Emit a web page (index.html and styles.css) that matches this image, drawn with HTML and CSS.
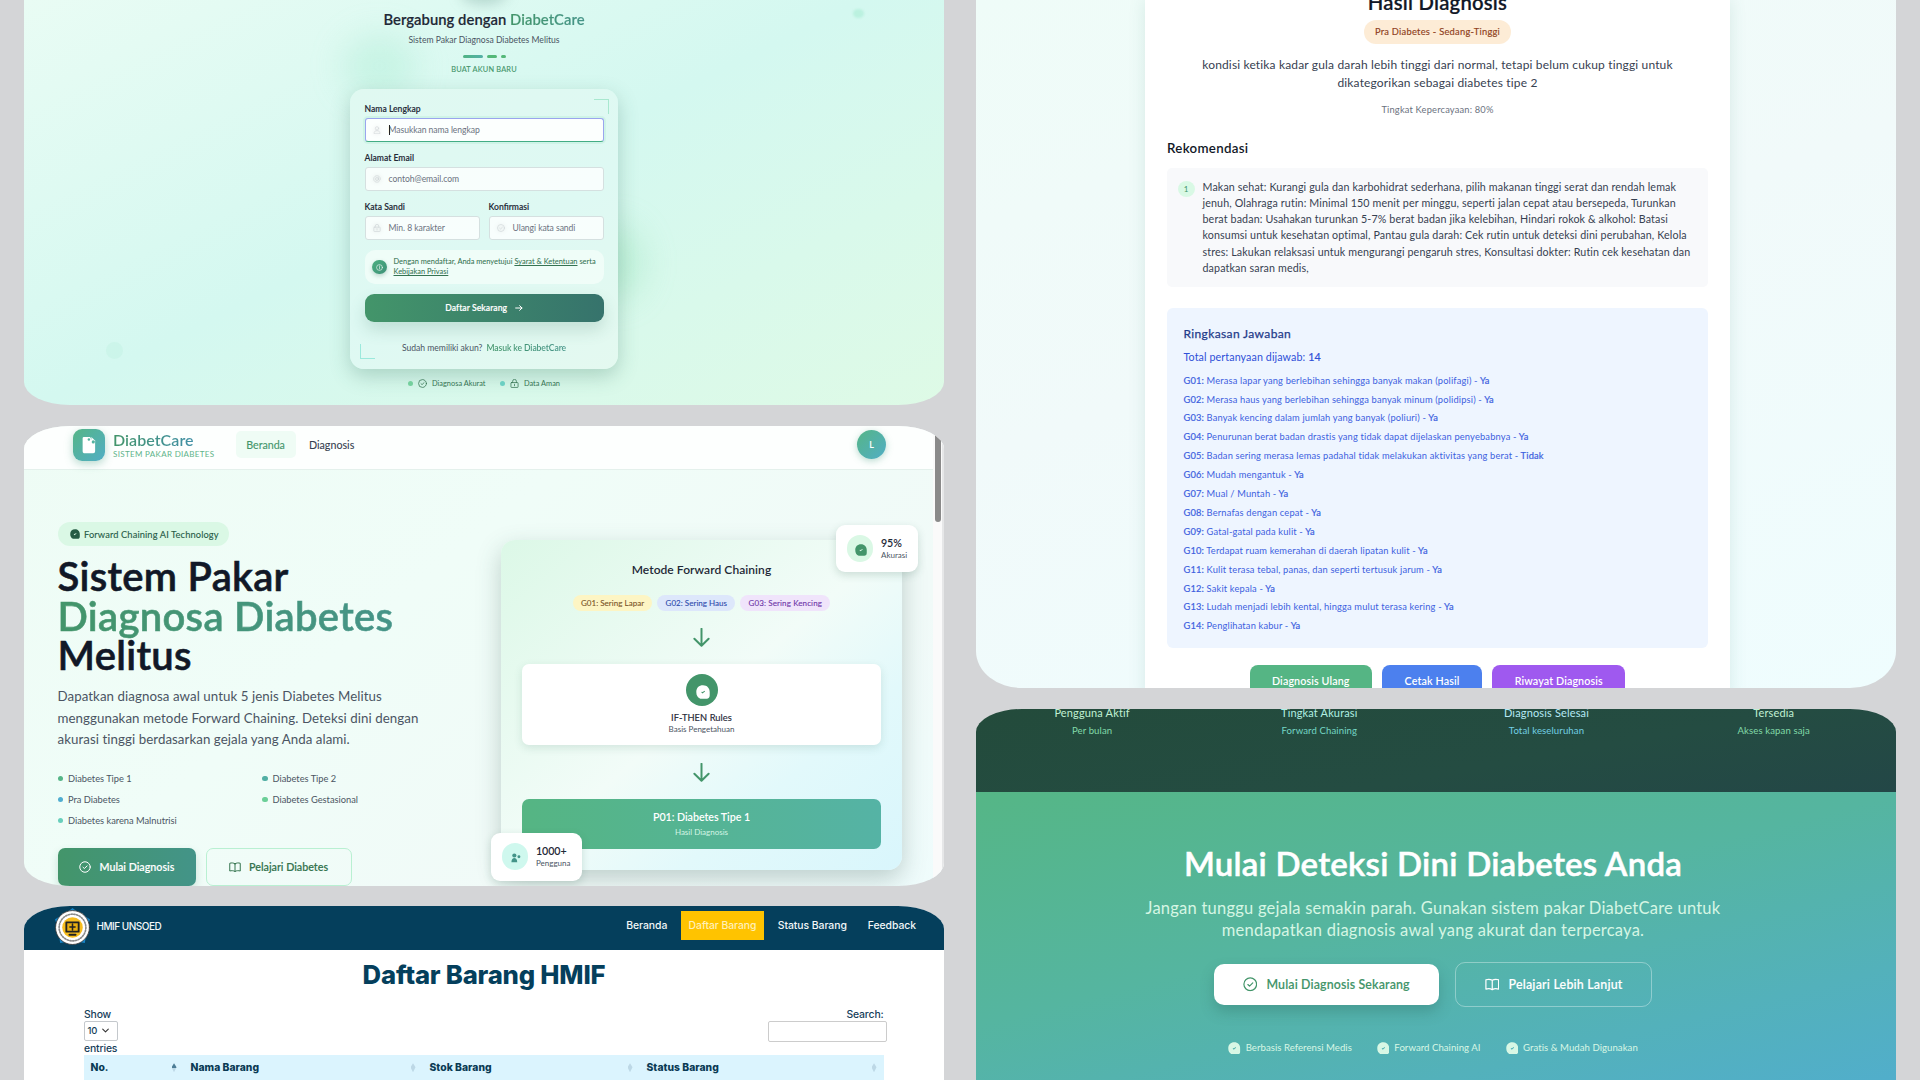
FILE: index.html
```html
<!DOCTYPE html>
<html lang="id">
<head>
<meta charset="utf-8">
<title>DiabetCare</title>
<link rel="stylesheet" href="styles.css">
</head>
<body>
<svg class="sprite" aria-hidden="true">
  <symbol id="check" viewBox="0 0 24 24"><circle cx="12" cy="12" r="10.5"/><path d="M8 12.5l2.8 2.5 5.4-5.2"/></symbol>
  <symbol id="lock" viewBox="0 0 24 24"><rect x="2.5" y="9.5" width="19" height="13" rx="1.5"/><path d="M7 9.500V6a5 5 0 0 1 10 0v3.500M12 14v4"/></symbol>
  <symbol id="book" viewBox="0 0 24 24"><path d="M12 5.500C9 3.500 5 3.500 1.500 4.500v15.500c3.500-1 7.500-1 10.500 1 3-2 7-2 10.500-1V4.500C19 3.500 15 3.500 12 5.500zV21"/></symbol>
  <symbol id="blob" viewBox="0 0 24 24"><path fill-rule="evenodd" d="M12 0.500c7 0 11.500 5 11.500 11.500v6c0 3.500-2 5.500-5 5.500H7.500C3 22 0.500 18 0.500 12 0.500 5 5 0.500 12 0.500zM9 12.500l2 2.200L15.500 11l-.6-1.200-3.600 2.200-1.500-.5z"/></symbol>
  <symbol id="down" viewBox="0 0 24 24"><path d="M12 1v21M3 13.500l9 9 9-9"/></symbol>
</svg>
<main class="board">
<div class="col">

<section class="panel signup">
  <i class="glow g1"></i><i class="glow g2"></i><i class="glow g3"></i><i class="ring"></i><i class="speck"></i>
  <h2 class="su-title">Bergabung dengan <span>DiabetCare</span></h2>
  <p class="su-sub">Sistem Pakar Diagnosa Diabetes Melitus</p>
  <div class="dashes"><i></i><i></i><i></i></div>
  <p class="su-tag">BUAT AKUN BARU</p>
  <form class="su-card">
    <i class="corner tr"></i><i class="corner bl"></i>
    <div class="field"><label>Nama Lengkap</label><div class="input focus"><svg viewBox="0 0 24 24"><circle cx="12" cy="7" r="5"/><path d="M3 22c0-6 4-8 9-8s9 2 9 8z"/></svg><b class="caret"></b>Masukkan nama lengkap</div></div>
    <div class="field"><label>Alamat Email</label><div class="input"><svg viewBox="0 0 24 24"><circle cx="12" cy="12" r="4.500"/><path d="M16.500 8v5.500c0 4 5.500 3 5.500-1.500a10 10 0 1 0-4 8"/></svg>contoh@email.com</div></div>
    <div class="pair">
      <div class="field"><label>Kata Sandi</label><div class="input"><svg><use href="#lock"/></svg>Min. 8 karakter</div></div>
      <div class="field"><label>Konfirmasi</label><div class="input"><svg><use href="#check"/></svg>Ulangi kata sandi</div></div>
    </div>
    <div class="terms"><span class="info"><svg viewBox="0 0 24 24"><circle cx="12" cy="12" r="10"/><path d="M12 11v6M12 6.500v2"/></svg></span><p>Dengan mendaftar, Anda menyetujui <u>Syarat &amp; Ketentuan</u> serta<br><u>Kebijakan Privasi</u></p></div>
    <div class="su-btn">Daftar Sekarang<svg viewBox="0 0 24 24"><path d="M2 12h19M14 5l7 7-7 7"/></svg></div>
    <p class="su-login">Sudah memiliki akun? <b>Masuk ke DiabetCare</b></p>
  </form>
  <div class="su-foot"><span><i></i><svg><use href="#check"/></svg>Diagnosa Akurat</span><span><i class="teal"></i><svg><use href="#lock"/></svg>Data Aman</span></div>
</section>

<section class="panel home">
  <header class="h-nav">
    <div class="logo"><svg viewBox="0 0 24 28"><path d="M3 1h10l2 4 6 4v15a3 3 0 0 1-3 3H3a3 3 0 0 1-2-3V3a2 2 0 0 1 2-2z"/><path d="M15 1l7 7h-7z"/><circle class="hole" cx="11" cy="5" r="2"/><circle class="hole" cx="18" cy="9" r="2.500"/></svg></div>
    <div class="brand"><b>DiabetCare</b><small>SISTEM PAKAR DIABETES</small></div>
    <a class="on">Beranda</a><a>Diagnosis</a>
    <span class="avatar">L</span>
  </header>
  <div class="h-body">
    <div class="hero">
      <span class="badge"><svg><use href="#blob"/></svg>Forward Chaining AI Technology</span>
      <h1>Sistem Pakar<br><em>Diagnosa Diabetes</em><br>Melitus</h1>
      <p class="lead">Dapatkan diagnosa awal untuk 5 jenis Diabetes Melitus<br>menggunakan metode Forward Chaining. Deteksi dini dengan<br>akurasi tinggi berdasarkan gejala yang Anda alami.</p>
      <ul class="types"><li class="c1">Diabetes Tipe 1</li><li class="c2">Diabetes Tipe 2</li><li class="c3">Pra Diabetes</li><li class="c4">Diabetes Gestasional</li><li class="c5">Diabetes karena Malnutrisi</li></ul>
      <div class="h-btns"><a class="fill"><svg><use href="#check"/></svg>Mulai Diagnosis</a><a class="line"><svg><use href="#book"/></svg>Pelajari Diabetes</a></div>
    </div>
    <div class="flow">
      <h3>Metode Forward Chaining</h3>
      <div class="chips"><span class="y">G01: Sering Lapar</span><span class="b">G02: Sering Haus</span><span class="p">G03: Sering Kencing</span></div>
      <svg class="arrow"><use href="#down"/></svg>
      <div class="rules"><span><svg><use href="#blob"/></svg></span><b>IF-THEN Rules</b><small>Basis Pengetahuan</small></div>
      <svg class="arrow"><use href="#down"/></svg>
      <div class="result"><b>P01: Diabetes Tipe 1</b><small>Hasil Diagnosis</small></div>
      <div class="float top"><span><svg><use href="#blob"/></svg></span><p><b>95%</b><small>Akurasi</small></p></div>
      <div class="float bottom"><span><svg viewBox="0 0 24 24"><circle cx="8" cy="6" r="5"/><circle cx="19" cy="9" r="3.500"/><path d="M1 22c0-13 14-13 14 0z"/></svg></span><p><b>1000+</b><small>Pengguna</small></p></div>
    </div>
  </div>
  <i class="scroll"></i>
</section>

<section class="panel stock">
  <header>
    <svg class="seal" viewBox="0 0 36 36"><path fill="#1784c7" d="M18 0l5 4 12 7-3 10-2 13-12-2-12 2-2-13-3-10 12-7z"/><circle cx="18" cy="19" r="16.500" fill="#fff" stroke="#333" stroke-width=".8"/><circle cx="18" cy="19" r="13" fill="none" stroke="#8a8a8a" stroke-width="1.600" stroke-dasharray="1.200 1.500"/><circle cx="18" cy="19" r="10" fill="#f7bd1e"/><path d="M12 14h12v9H12zM15 26h6" fill="#e8ad10" stroke="#222" stroke-width="1.800"/><path d="M18 15.500v6M15.500 18.500h5" stroke="#222" stroke-width="1.500"/></svg>
    <b>HMIF UNSOED</b>
    <nav><a>Beranda</a><a class="on">Daftar Barang</a><a>Status Barang</a><a>Feedback</a></nav>
  </header>
  <h2>Daftar Barang HMIF</h2>
  <div class="tools">
    <div>Show<span class="select">10<svg viewBox="0 0 10 6"><path d="M1 1l4 4 4-4"/></svg></span>entries</div>
    <div class="search"><b>Search:</b><span></span></div>
  </div>
  <div class="thead"><span class="asc">No.</span><span>Nama Barang</span><span>Stok Barang</span><span>Status Barang</span></div>
</section>
</div>

<div class="col">
<section class="panel diag">
  <div class="sheet">
    <h2>Hasil Diagnosis</h2>
    <span class="pill">Pra Diabetes - Sedang-Tinggi</span>
    <p class="desc">kondisi ketika kadar gula darah lebih tinggi dari normal, tetapi belum cukup tinggi untuk<br>dikategorikan sebagai diabetes tipe 2</p>
    <p class="conf">Tingkat Kepercayaan: 80%</p>
    <h3>Rekomendasi</h3>
    <div class="rec"><span>1</span><p>Makan sehat: Kurangi gula dan karbohidrat sederhana, pilih makanan tinggi serat dan rendah lemak<br>jenuh, Olahraga rutin: Minimal 150 menit per minggu, seperti jalan cepat atau bersepeda, Turunkan<br>berat badan: Usahakan turunkan 5-7% berat badan jika kelebihan, Hindari rokok &amp; alkohol: Batasi<br>konsumsi untuk kesehatan optimal, Pantau gula darah: Cek rutin untuk deteksi dini perubahan, Kelola<br>stres: Lakukan relaksasi untuk mengurangi pengaruh stres, Konsultasi dokter: Rutin cek kesehatan dan<br>dapatkan saran medis,</p></div>
    <div class="sum">
      <h4>Ringkasan Jawaban</h4>
      <p class="total">Total pertanyaan dijawab: <b>14</b></p>
      <ul>
        <li><b>G01:</b> Merasa lapar yang berlebihan sehingga banyak makan (polifagi) - <b>Ya</b></li>
        <li><b>G02:</b> Merasa haus yang berlebihan sehingga banyak minum (polidipsi) - <b>Ya</b></li>
        <li><b>G03:</b> Banyak kencing dalam jumlah yang banyak (poliuri) - <b>Ya</b></li>
        <li><b>G04:</b> Penurunan berat badan drastis yang tidak dapat dijelaskan penyebabnya - <b>Ya</b></li>
        <li><b>G05:</b> Badan sering merasa lemas padahal tidak melakukan aktivitas yang berat - <b>Tidak</b></li>
        <li><b>G06:</b> Mudah mengantuk - <b>Ya</b></li>
        <li><b>G07:</b> Mual / Muntah - <b>Ya</b></li>
        <li><b>G08:</b> Bernafas dengan cepat - <b>Ya</b></li>
        <li><b>G09:</b> Gatal-gatal pada kulit - <b>Ya</b></li>
        <li><b>G10:</b> Terdapat ruam kemerahan di daerah lipatan kulit - <b>Ya</b></li>
        <li><b>G11:</b> Kulit terasa tebal, panas, dan seperti tertusuk jarum - <b>Ya</b></li>
        <li><b>G12:</b> Sakit kepala - <b>Ya</b></li>
        <li><b>G13:</b> Ludah menjadi lebih kental, hingga mulut terasa kering - <b>Ya</b></li>
        <li><b>G14:</b> Penglihatan kabur - <b>Ya</b></li>
      </ul>
    </div>
    <div class="acts"><a class="green">Diagnosis Ulang</a><a class="blue">Cetak Hasil</a><a class="purple">Riwayat Diagnosis</a></div>
  </div>
</section>

<section class="panel cta">
  <div class="stats">
    <div class="s1"><b>Pengguna Aktif</b><small>Per bulan</small></div>
    <div class="s2"><b>Tingkat Akurasi</b><small>Forward Chaining</small></div>
    <div class="s3"><b>Diagnosis Selesai</b><small>Total keseluruhan</small></div>
    <div class="s1"><b>Tersedia</b><small>Akses kapan saja</small></div>
  </div>
  <div class="cta-body">
    <h2>Mulai Deteksi Dini Diabetes Anda</h2>
    <p>Jangan tunggu gejala semakin parah. Gunakan sistem pakar DiabetCare untuk<br>mendapatkan diagnosis awal yang akurat dan terpercaya.</p>
    <div class="cta-btns"><a class="solid"><svg><use href="#check"/></svg>Mulai Diagnosis Sekarang</a><a class="ghost"><svg><use href="#book"/></svg>Pelajari Lebih Lanjut</a></div>
    <div class="feats"><span><svg><use href="#blob"/></svg>Berbasis Referensi Medis</span><span><svg><use href="#blob"/></svg>Forward Chaining AI</span><span><svg><use href="#blob"/></svg>Gratis &amp; Mudah Digunakan</span></div>
  </div>
</section>
</div>
</main>
</body>
</html>
```
FILE: styles.css
```css
* { box-sizing: border-box; margin: 0; padding: 0; }
html, body { height: 1080px; overflow: hidden; }
body { background: #d4d5d7; font-family: Lato, "Open Sans", sans-serif; color: #374151; }
.sprite { position: absolute; width: 0; height: 0; }
svg { fill: none; stroke: currentColor; stroke-width: 2; stroke-linecap: round; stroke-linejoin: round; flex: none; }
ul { list-style: none; }
small { display: block; }
.board { display: grid; grid-template-columns: 920px 920px; column-gap: 32px; padding: 0 24px; height: 1080px; }
.col { display: flex; flex-direction: column; gap: 21px; height: 1080px; white-space: nowrap; }
.panel { position: relative; overflow: hidden; flex: none; }

/* Sign-up */
.signup { height: 405px; border-radius: 0 0 46px 46px / 0 0 23px 23px; background: linear-gradient(154deg, #e9fcf4 0%, #d4f8f0 48%, #defae6 100%); display: flex; flex-direction: column; align-items: center; }
.signup > :not(.glow):not(.ring):not(.speck) { position: relative; }
.glow { position: absolute; border-radius: 50%; filter: blur(16px); }
.g1 { left: 318px; top: 34px; width: 75px; height: 64px; background: rgba(134,225,190,.24); }
.g2 { left: 562px; top: 225px; width: 58px; height: 75px; background: rgba(120,215,160,.26); }
.g3 { left: 437px; top: -18px; width: 46px; height: 22px; background: rgba(80,130,120,.3); filter: blur(7px); }
.ring { position: absolute; left: 82px; top: 342px; width: 17px; height: 17px; border-radius: 50%; background: rgba(170,235,210,.2); }
.speck { position: absolute; left: 829px; top: 9px; width: 11px; height: 9px; border-radius: 50%; background: rgba(130,225,185,.3); filter: blur(1px); }
.su-title { font-size: 14.8px; font-weight: 600; line-height: 20px; margin-top: 9px; color: #1f2937; height: 20px; letter-spacing: .04px; -webkit-text-stroke: .15px; }
.su-title span { color: transparent; background: linear-gradient(90deg, #43956a, #459488); -webkit-background-clip: text; background-clip: text; }
.su-sub { font-size: 8.6px; line-height: 12px; margin-top: 5px; color: #4b5563; }
.dashes { display: flex; gap: 4px; margin-top: 9px; height: 3px; }
.dashes i { border-radius: 2px; width: 20px; background: linear-gradient(90deg, #4fb483, #55b0a8); }
.dashes i + i { width: 10px; background: #54b878; }
.dashes i + i + i { width: 5px; }
.su-tag { font-size: 7.4px; letter-spacing: .18px; line-height: 10px; margin-top: 6.500px; color: #43956a; -webkit-text-stroke: .1px; }
.su-card { width: 268px; height: 280px; margin-top: 14px; padding: 14.500px; border-radius: 14px; background: linear-gradient(150deg, #e0f9f1, #def9f3 55%, #e4f9f0); box-shadow: 0 7px 20px rgba(50,110,90,.28); }
.corner { position: absolute; width: 15px; height: 15px; border: 1px solid #a8e8cf; }
.tr { right: 9px; top: 10px; border-left: 0; border-bottom: 0; }
.bl { left: 10px; bottom: 10px; border-right: 0; border-top: 0; border-color: #9be9dc; }
.field label { display: block; font-size: 8.6px; font-weight: 600; line-height: 13px; margin-bottom: 2px; color: #1f2937; -webkit-text-stroke: .1px; }
.input { height: 24px; margin-bottom: 10px; border: 1px solid #d5e0e0; border-radius: 3px; background: rgba(255,255,255,.78); padding-left: 7px; display: flex; align-items: center; font-size: 8.6px; letter-spacing: -.06px; color: #6b7280; position: relative; }
.input svg { width: 8px; height: 8px; margin-right: 8px; opacity: .28; filter: drop-shadow(0 0 2px #777); }
.focus { border: 1px solid #9aa5ee; border-bottom-color: #43ad85; background: #fcfffe; box-shadow: 0 0 0 2px rgba(110,220,170,.14); }
.caret { position: absolute; left: 23.500px; width: 1px; height: 10px; background: #222; }
.pair { display: grid; grid-template-columns: 1fr 1fr; gap: 9px; }
.terms { height: 34px; margin-top: 0; border-radius: 10px; background: rgba(244,254,249,.75); padding-left: 7.500px; display: flex; align-items: center; gap: 7px; }
.info { width: 14.500px; height: 14.500px; border-radius: 50%; background: linear-gradient(135deg, #4caf80, #3e9178); color: #fff; display: grid; place-items: center; box-shadow: 0 2px 4px rgba(40,100,80,.25); }
.info svg { width: 7px; height: 7px; }
.terms p { font-size: 7.4px; line-height: 9.600px; letter-spacing: .015px; color: #357352; -webkit-text-stroke: .05px; }
.su-btn { height: 27.500px; margin-top: 10px; border-radius: 9px; background: linear-gradient(90deg, #43956a, #36736c); color: #fff; font-size: 8.6px; font-weight: 600; -webkit-text-stroke: .15px; letter-spacing: .05px; display: flex; align-items: center; justify-content: center; gap: 7.500px; box-shadow: 0 8px 16px rgba(50,110,90,.18); }
.su-btn svg { width: 8px; height: 8px; stroke-width: 3; }
.su-login { margin-top: 20px; font-size: 8.6px; line-height: 12px; text-align: center; letter-spacing: -.02px; color: #4b5563; }
.su-login b { margin-left: 2px; font-weight: 600; color: transparent; background: linear-gradient(90deg, #43956a, #459488); background-clip: text; -webkit-background-clip: text; letter-spacing: -.1px; }
.su-foot { margin-top: 9px; display: flex; gap: 14.500px; font-size: 7.4px; line-height: 11px; color: #357352; }
.su-foot span { display: flex; align-items: center; }
.su-foot i { width: 5px; height: 5px; border-radius: 50%; background: #74cf9d; margin-right: 5px; }
.su-foot .teal { background: #6bcfc2; }
.su-foot svg { width: 9px; height: 9px; margin-right: 5px; }

/* Home */
.home { height: 460px; border-radius: 46px / 23px; background: linear-gradient(140deg, #eefcf5 0%, #f0fdf8 40%, #f1faf8 75%, #effcfc 100%); padding-right: 11px; }
.h-nav { height: 43.500px; background: rgba(255,255,255,.86); border-bottom: 1px solid #e4f1ec; display: flex; align-items: center; padding: 0 47px 5px 49px; }
.logo { width: 32px; height: 32px; border-radius: 9px; background: linear-gradient(135deg, #55b587, #51aec5); display: grid; place-items: center; box-shadow: 0 3px 8px rgba(60,150,120,.35); }
.logo svg { width: 15px; height: 18px; fill: #fff; stroke: none; }
.logo .hole { fill: #54b3a0; }
.brand { margin: 1px 21px 0 8px; width: 101.500px; }
.brand b { display: block; width: 82px; font-size: 16px; font-weight: 600; line-height: 19px; color: transparent; background: linear-gradient(90deg, #43956a, #4290a8); background-clip: text; -webkit-background-clip: text; letter-spacing: .05px; }
.brand small { font-size: 8px; letter-spacing: .33px; line-height: 11px; color: #60b48a; }
.h-nav a { height: 27px; line-height: 27px; padding: 0 10.800px; font-size: 10.7px; color: #374151; -webkit-text-stroke: .1px; margin-right: 2.500px; border-radius: 5px; }
.h-nav .on { color: #43956a; background: #effcf5; letter-spacing: -.04px; }
.avatar { margin-left: auto; margin-right: 0; width: 29px; height: 29px; border-radius: 50%; background: linear-gradient(135deg, #55b587, #51aec5); color: #fff; font-size: 9px; font-weight: 600; display: grid; place-items: center; box-shadow: 0 2px 7px rgba(60,150,120,.35); transform: none; }
.h-body { display: grid; grid-template-columns: 410px 401px; gap: 33.500px; padding-left: 33.500px; }
.hero { padding-top: 52.500px; }
.badge { display: inline-flex; align-items: center; height: 24px; padding: 0 10.500px 0 12px; border-radius: 12px; background: #daf8e5; color: #265b45; font-size: 9.3px; letter-spacing: .11px; -webkit-text-stroke: .1px; vertical-align: top; }
.badge svg, .rules svg, .float svg, .feats svg { fill: currentColor; stroke: none; }
.badge svg { width: 10px; height: 10px; margin-right: 4.500px; }
.hero h1 { font-size: 40px; font-weight: 600; line-height: 39.600px; margin-top: 11px; color: #111827; letter-spacing: .3px; -webkit-text-stroke: .6px #111827; }
.hero em { font-style: normal; color: transparent; background: linear-gradient(90deg, #43956a, #459488); background-clip: text; -webkit-background-clip: text; -webkit-text-stroke: .6px transparent; display: inline-block; height: 43px; line-height: 39.600px; margin-bottom: -3.400px; vertical-align: top; }
.lead { font-size: 13.3px; line-height: 21.500px; letter-spacing: .06px; margin-top: 10.500px; color: #4b5563; }
.types { display: grid; grid-template-columns: 1fr 1fr; margin-top: 17px; width: 409px; }
.types li { display: flex; align-items: center; height: 21.100px; font-size: 9.3px; color: #4b5563; letter-spacing: -.01px; }
.types li::before { content: ""; width: 5.500px; height: 5.500px; border-radius: 50%; margin-right: 5px; background: #55b587; }
.types .c2::before { background: #52afa4; }
.types .c3::before { background: #50add0; }
.types .c4::before { background: #6bcf98; }
.types .c5::before { background: #68cfbc; }
.h-btns { display: flex; gap: 10.500px; margin-top: 16.500px; }
.h-btns a { height: 38px; border-radius: 7px; display: flex; align-items: center; font-size: 10.7px; font-weight: 600; padding: 0 21.500px 0 21.500px; gap: 8.500px; -webkit-text-stroke: .1px; }
.h-btns svg { width: 12px; height: 12px; }
.fill { width: 138px; background: linear-gradient(90deg, #43956a, #439488); color: #fff; box-shadow: 0 4px 8px rgba(50,120,90,.2); letter-spacing: 0; }
.line { width: 146px; border: 1px solid #b9f0d2; color: #35744f; }
.flow { position: relative; margin-top: 70.500px; height: 330px; border-radius: 14px; padding: 21px; background: linear-gradient(140deg, #dcf8e7 0%, #f2fcf8 50%, #e2f9fb 72%, #d9f6fc 100%); box-shadow: 0 9px 24px rgba(50,90,80,.27); display: flex; flex-direction: column; align-items: center; }
.flow h3 { font-size: 12px; font-weight: 600; line-height: 18px; letter-spacing: .06px; color: #1f2937; }
.chips { display: flex; gap: 5px; margin-top: 16px; }
.chips span { height: 16px; line-height: 16px; border-radius: 8px; padding: 0 8.200px; font-size: 8px; letter-spacing: .03px; -webkit-text-stroke: .1px; }
.y { background: #fdf5c4; color: #7a5427; }
.b { background: #dde7fb; color: #2e4bad; }
.chips .p { background: #f0e4fb; color: #6d35a8; letter-spacing: .12px; }
.arrow { width: 19px; height: 19px; margin-top: 17px; color: #43956a; stroke-width: 2.500; }
.rules { width: 359px; height: 81.500px; margin-top: 17px; background: #fff; border-radius: 7px; box-shadow: 0 3px 8px rgba(60,120,100,.16); display: flex; flex-direction: column; align-items: center; padding-top: 10px; }
.rules span { width: 32px; height: 32px; flex: none; border-radius: 50%; background: #43956a; color: #fff; display: grid; place-items: center; padding: 3px 0 0 3px; }
.rules svg { width: 14px; height: 14px; }
.rules b { font-size: 9.3px; font-weight: 400; -webkit-text-stroke: .15px; line-height: 12px; margin-top: 6px; color: #1f2937; letter-spacing: .06px; }
.rules small, .result small, .float small { font-size: 8px; line-height: 11px; color: #4b5563; }
.rules + .arrow { margin-top: 17.500px; margin-bottom: 17px; }
.result { width: 359px; height: 50.500px; border-radius: 7px; background: linear-gradient(90deg, #55b583, #55b3a5); color: #fff; text-align: center; padding-top: 10.500px; }
.result b { display: block; font-size: 10.7px; font-weight: 600; line-height: 15px; letter-spacing: -.05px; }
.result .result small, .result small { color: #d3f5e4; margin-top: 2.500px; }
.float { position: absolute; display: flex; align-items: center; gap: 8px; padding-left: 10.500px; background: #fff; border-radius: 9px; box-shadow: 0 3px 8px rgba(50,100,80,.2); }
.float span { width: 26.500px; height: 26.500px; border-radius: 50%; background: #daf8e5; color: #43956a; display: grid; place-items: center; padding: 2px 0 0 2px; }
.float svg { width: 12px; height: 12px; }
.float b { display: block; font-size: 10.7px; font-weight: 600; line-height: 14px; color: #1f2937; letter-spacing: -.1px; }
.top { left: 335px; top: -15px; width: 81.500px; height: 47px; }
.bottom { left: -10px; top: 292.500px; width: 91px; height: 48px; }
.bottom span { background: #cff8ee; color: #439488; }
.bottom svg { width: 10px; height: 10px; }
.scroll { position: absolute; right: 0; top: 0; width: 11px; height: 460px; background: #fafafa; }
.scroll::before { content: ""; position: absolute; left: 2px; top: 0; width: 6px; height: 96px; border-radius: 3px; background: #8a8a8a; }
.scroll::after { content: ""; position: absolute; right: 0; top: 0; width: 2px; height: 460px; background: #e6e7e8; }

/* Inventory */
.stock { height: 174px; margin-top: -1px; background: #fff; border-radius: 46px 46px 0 0 / 23px 23px 0 0; font-family: Inter, sans-serif; font-size: 10.4px; font-weight: 500; color: #16405a; }
.stock header { height: 43.500px; background: #053f5c; color: #f3f7f9; display: flex; align-items: center; padding: 0 17.500px 4.500px 30px; }
.seal { width: 37px; height: 37px; stroke: none; margin-top: 1px; }
.stock header b { margin-left: 5.500px; font-weight: 500; font-size: 10px; letter-spacing: -.5px; }
.stock nav { margin-left: auto; display: flex; }
.stock nav a { padding: 0 10.500px; height: 29px; line-height: 29px; font-size: 10.4px; letter-spacing: -.05px; }
.stock nav .on { background: #ffc300; color: #fff0b8; width: 83.500px; padding: 0; text-align: center; margin: 0 3px; }
.stock h2 { text-align: center; font-size: 25.700px; line-height: 34px; margin-top: 8.500px; font-weight: 800; letter-spacing: -.2px; color: #053f5c; }
.tools { display: flex; justify-content: space-between; padding: 17px 57.500px 0 60px; line-height: 13px; height: 65px; letter-spacing: -.15px; margin-top: -1px; }
.select { display: flex; align-items: center; justify-content: space-between; width: 34px; height: 19.500px; border: 1px solid #c4c8cc; border-radius: 2px; padding: 0 8px 0 2.500px; margin: 0 0 1px; font-size: 9.500px; }
.select svg { width: 7px; height: 5px; stroke-width: 1.500; color: #333; }
.search { text-align: right; }
.search b { font-weight: 500; margin-right: 3px; }
.search span { display: block; width: 118.500px; height: 20.500px; border: 1px solid #ccc; border-radius: 2px; margin-top: 0; }
.thead { margin: -1.500px 60px 0; height: 25.500px; background: #dbf4fe; display: grid; grid-template-columns: 100px 239px 217px 244px; align-items: center; font-weight: 800; font-size: 10.3px; letter-spacing: .05px; color: #0a3a54; }
.thead span { position: relative; padding-left: 6.500px; }
.thead span::after { content: ""; position: absolute; right: 7.500px; top: 2px; width: 5px; height: 9px; background: #bdd8e6; clip-path: polygon(50% 0, 100% 45%, 50% 100%, 0 45%); }
.thead .asc::after { background: linear-gradient(#4d7d96 50%, #bdd8e6 50%); }

/* Diagnosis result */
.diag { height: 688px; border-radius: 0 0 46px 46px / 0 0 37px 37px; background: linear-gradient(160deg, #effcf8, #f1fafa 45%, #effdfe); }
.sheet { width: 584.500px; height: 700px; margin-left: 169px; background: #fff; box-shadow: 0 0 16px rgba(60,130,110,.14); padding: 0 21.500px 0 22px; display: flex; flex-direction: column; align-items: center; color: #374151; }
.sheet > * { flex: none; }
.sheet h2 { font-size: 20.300px; font-weight: 600; line-height: 26px; margin-top: -11.500px; color: #111827; letter-spacing: .22px; -webkit-text-stroke: .2px; }
.pill { height: 24px; line-height: 24px; border-radius: 12px; padding: 0 11px; margin-top: 5.500px; background: #fdecd6; color: #8f3f1c; font-size: 9.3px; letter-spacing: .27px; -webkit-text-stroke: .15px; }
.desc { font-size: 12px; line-height: 18.800px; letter-spacing: .155px; margin-top: 11.500px; text-align: center; }
.conf { font-size: 9.3px; line-height: 14px; letter-spacing: .18px; margin-top: 10px; color: #6b7280; }
.sheet h3 { align-self: flex-start; font-size: 13.3px; font-weight: 600; line-height: 18px; letter-spacing: .3px; margin-top: 22px; color: #111827; }
.rec { width: 541px; height: 118.500px; background: #f8f9fb; border-radius: 5px; margin-top: 11px; padding: 10.500px; display: flex; }
.rec span { width: 17px; height: 16px; margin: 2px 8px 0 0; border-radius: 50%; background: #d9f9e5; color: #43956a; font-size: 8px; line-height: 16px; text-align: center; }
.rec p { font-size: 10.7px; line-height: 16.250px; letter-spacing: .13px; }
.sum { width: 541px; height: 340px; background: #eef5ff; border-radius: 6px; margin-top: 21.500px; padding: 16.500px; color: #3c5fe0; }
.sum b { font-weight: 400; -webkit-text-stroke: .2px; }
.sum h4 { font-size: 12px; font-weight: 400; -webkit-text-stroke: .25px; letter-spacing: .37px; line-height: 18px; color: #1e3a8a; }
.total { font-size: 10.7px; line-height: 16px; letter-spacing: .1px; margin-top: 6.500px; color: #2f50d8; }
.sum ul { margin-top: 6.500px; }
.sum li { height: 18.920px; line-height: 18.920px; font-size: 9.3px; letter-spacing: .165px; }
.acts { display: flex; gap: 10.500px; margin-top: 16.500px; }
.acts a { height: 40px; line-height: 32px; color: #fff; border-radius: 8px; font-size: 10.7px; font-weight: 600; text-align: center; letter-spacing: .12px; }
.green { width: 122px; background: #55b584; }
.blue { width: 99.500px; background: #4c80ee; }
.purple { width: 133px; background: #9f59ef; }

/* Call to action */
.cta { height: 371px; border-radius: 46px 46px 0 0 / 23px 23px 0 0; }
.stats { height: 83px; background: linear-gradient(170deg, #234b3b, #244c42 60%, #234747); display: grid; grid-template-columns: repeat(4, 227.200px); padding-left: 2.500px; text-align: center; overflow: hidden; }
.stats b { display: block; margin-top: -3.500px; font-size: 11px; font-weight: 400; line-height: 14px; letter-spacing: .15px; }
.stats small { font-size: 9.6px; line-height: 14px; letter-spacing: .1px; margin-top: 4.500px; }
.s1 { color: #c0f0d3; } .s1 small { color: #82d9a8; }
.s2 { color: #b0efe2; } .s2 small { color: #74d6c4; }
.s3 { color: #b4e9f5; } .s3 small { color: #72cfe4; }
.cta-body { height: 288px; padding-right: 6px; background: linear-gradient(166deg, #55b686 0%, #55b5a0 45%, #53b1bb 78%, #51aecb 100%); color: #fff; display: flex; flex-direction: column; align-items: center; }
.cta h2 { font-size: 33px; font-weight: 600; line-height: 42px; margin-top: 50px; letter-spacing: .24px; -webkit-text-stroke: .5px #fff; }
.cta p { font-size: 16.500px; line-height: 22.100px; letter-spacing: .23px; margin-top: 13px; text-align: center; color: #d6f6e4; }
.cta-btns { display: flex; align-items: center; gap: 16.500px; margin-top: 21px; }
.cta-btns a { display: flex; align-items: center; gap: 9.500px; font-size: 12.4px; font-weight: 600; border-radius: 10px; -webkit-text-stroke: .1px; }
.cta-btns svg { width: 14.500px; height: 14.500px; }
.solid { width: 224.500px; height: 41.500px; padding-left: 28.500px; background: #fff; color: #43956a; box-shadow: 0 7px 14px rgba(40,100,90,.3); letter-spacing: .13px; }
.ghost { width: 197px; height: 44.500px; padding-left: 28.500px; border: 1px solid rgba(255,255,255,.35); letter-spacing: .2px; }
.feats { display: flex; gap: 25px; margin-top: 33px; font-size: 9.6px; line-height: 15px; color: #d8f7e5; letter-spacing: .04px; }
.feats span { display: flex; align-items: center; gap: 5px; }
.feats svg { width: 12.500px; height: 12.500px; margin-top: 2px; }
```
